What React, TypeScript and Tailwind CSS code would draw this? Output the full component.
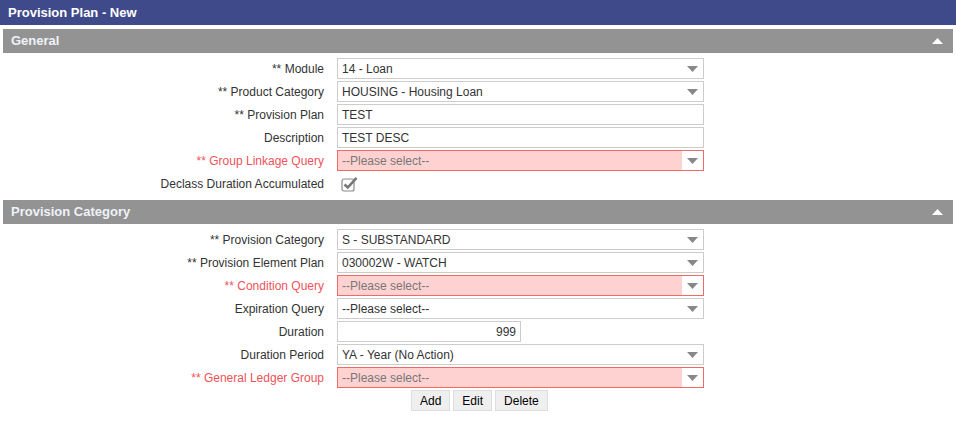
import React from "react";

type Row =
  | { kind: "select"; label: string; value: string; required?: boolean; error?: boolean }
  | { kind: "text"; label: string; value: string; required?: boolean }
  | { kind: "number"; label: string; value: string }
  | { kind: "check"; label: string };

const Arrow = () => (
  <div className="flex h-full w-[21px] items-center justify-center bg-white">
    <svg width="11" height="6" viewBox="0 0 11 6">
      <polygon points="0,0 11,0 5.5,6" fill="#888888" />
    </svg>
  </div>
);

const Field = ({ row }: { row: Row }) => {
  const red = row.kind === "select" && row.error;
  return (
    <div className="flex h-[21px] items-center">
      <div
        className={`w-[334px] shrink-0 pr-[13px] text-right ${
          red ? "text-[#f0525a]" : "text-[#333333]"
        }`}
      >
        {"required" in row && row.required ? "** " : ""}
        {row.label}
      </div>
      {row.kind === "select" && (
        <div
          className={`flex h-[21px] w-[367px] items-center border ${
            red ? "border-[#f06a6a] bg-[#ffd2d2]" : "border-[#cccccc] bg-white"
          }`}
        >
          <div className={`flex-1 pl-[4px] ${red ? "text-[#777777]" : "text-[#333333]"}`}>
            {row.value}
          </div>
          <Arrow />
        </div>
      )}
      {row.kind === "text" && (
        <div className="flex h-[21px] w-[367px] items-center border border-[#cccccc] bg-white pl-[4px] text-[#333333]">
          {row.value}
        </div>
      )}
      {row.kind === "number" && (
        <div className="flex h-[21px] w-[184px] items-center justify-end border border-[#cccccc] bg-white pr-[4px] text-[#333333]">
          {row.value}
        </div>
      )}
      {row.kind === "check" && (
        <div className="pl-[4px]">
          <svg width="18" height="16" viewBox="0 0 18 16">
            <rect x="1" y="3" width="12" height="12" rx="2" fill="white" stroke="#8a8a8a" strokeWidth="1.2" />
            <path d="M3.5 8.5 L6.8 11.5 L15.5 1.8" fill="none" stroke="#777777" strokeWidth="2.6" />
          </svg>
        </div>
      )}
    </div>
  );
};

const Header = ({ title }: { title: string }) => (
  <div className="flex h-[24px] items-center justify-between bg-[#939393] pl-[8px] pr-[10px]">
    <span className="text-[13px] font-bold text-[#eef2f8]">{title}</span>
    <svg width="11" height="6" viewBox="0 0 11 6">
      <polygon points="0,6 11,6 5.5,0" fill="#ffffff" />
    </svg>
  </div>
);

const general: Row[] = [
  { kind: "select", label: "Module", value: "14 - Loan", required: true },
  { kind: "select", label: "Product Category", value: "HOUSING - Housing Loan", required: true },
  { kind: "text", label: "Provision Plan", value: "TEST", required: true },
  { kind: "text", label: "Description", value: "TEST DESC" },
  { kind: "select", label: "Group Linkage Query", value: "--Please select--", required: true, error: true },
  { kind: "check", label: "Declass Duration Accumulated" },
];

const category: Row[] = [
  { kind: "select", label: "Provision Category", value: "S - SUBSTANDARD", required: true },
  { kind: "select", label: "Provision Element Plan", value: "030002W - WATCH", required: true },
  { kind: "select", label: "Condition Query", value: "--Please select--", required: true, error: true },
  { kind: "select", label: "Expiration Query", value: "--Please select--" },
  { kind: "number", label: "Duration", value: "999" },
  { kind: "select", label: "Duration Period", value: "YA - Year (No Action)" },
  { kind: "select", label: "General Ledger Group", value: "--Please select--", required: true, error: true },
];

export default function App() {
  return (
    <div
      className="h-[421px] w-[956px] overflow-hidden bg-white text-[12px]"
      style={{ fontFamily: '"Liberation Sans", Arial, sans-serif' }}
    >
      <div className="flex h-[25px] items-center bg-[#3f4a8a] pl-[8px] text-[13px] font-bold text-white">
        Provision Plan - New
      </div>
      <div className="mx-[3px] mt-[4px]">
        <Header title="General" />
        <div className="flex flex-col gap-[2px] pt-[5px]">
          {general.map((r) => (
            <Field key={r.label} row={r} />
          ))}
        </div>
        <div className="mt-[6px]">
          <Header title="Provision Category" />
        </div>
        <div className="flex flex-col gap-[2px] pt-[5px]">
          {category.map((r) => (
            <Field key={r.label} row={r} />
          ))}
        </div>
        <div className="mt-[2px] flex gap-[3px] pl-[408px]">
          {["Add", "Edit", "Delete"].map((b) => (
            <div
              key={b}
              className="flex h-[21px] items-center border border-[#dddddd] bg-[#efefef] px-[8px] text-[12px] text-black"
            >
              {b}
            </div>
          ))}
        </div>
      </div>
    </div>
  );
}
